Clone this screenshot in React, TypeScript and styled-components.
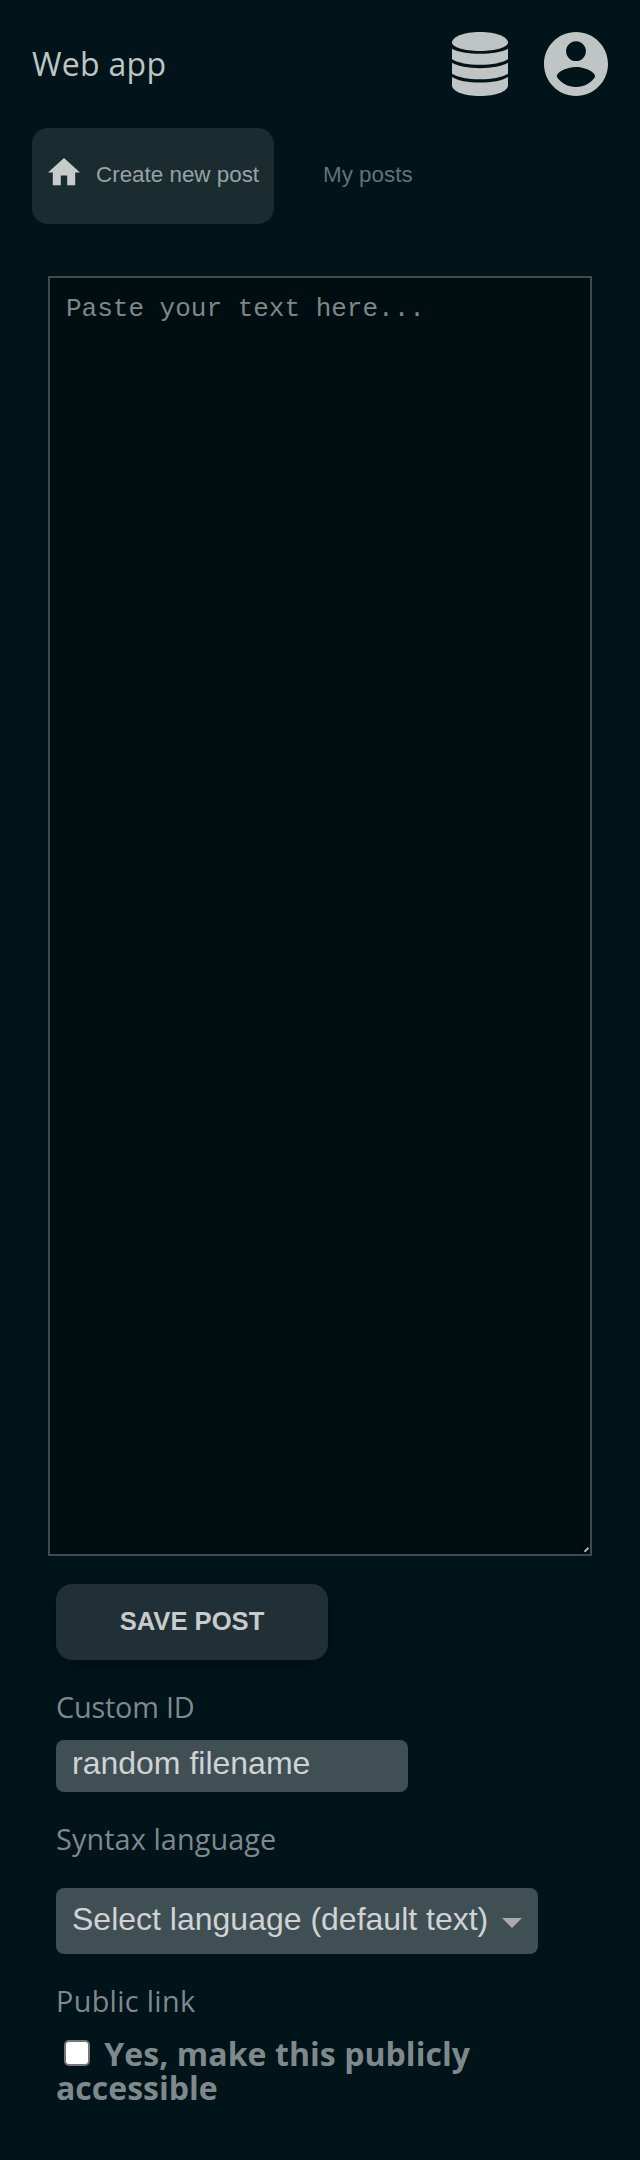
import React from 'react';
import styled, { createGlobalStyle } from 'styled-components';

const GlobalStyle = createGlobalStyle`
  *, *::before, *::after { box-sizing: border-box; }
  body {
    margin: 0;
    background: #001419;
    color: #bfc4c5;
    font-family: 'Open Sans', sans-serif;
  }
`;

const Page = styled.div`
  min-height: 2160px;
  display: flex;
  flex-direction: column;
`;

const Header = styled.header`
  display: flex;
  align-items: center;
  justify-content: space-between;
  height: 128px;
  padding: 0 32px;
`;

const Brand = styled.span`
  font-size: 32px;
  line-height: 44px;
  letter-spacing: 0.28px;
`;

const Actions = styled.div`
  display: flex;
  gap: 36px;
`;

const Icon = styled.svg<{ $w: number; $h: number }>`
  display: block;
  flex: none;
  width: ${(p) => p.$w}px;
  height: ${(p) => p.$h}px;
  fill: ${(p) => p.color ?? '#bfc4c5'};
`;

const Nav = styled.nav`
  display: flex;
  height: 96px;
  padding: 0 32px;
`;

const Tab = styled.a<{ $active?: boolean }>`
  display: flex;
  align-items: center;
  gap: 16px;
  width: 242px;
  padding-left: ${(p) => (p.$active ? 16 : 49)}px;
  padding-bottom: 2px;
  border-radius: 16px;
  background: ${(p) => (p.$active ? '#1a2c2f' : 'transparent')};
  color: ${(p) => (p.$active ? '#99a2a3' : '#667175')};
  font: 22.4px/26px 'Liberation Sans', sans-serif;
  white-space: nowrap;
`;

const TabIcon = styled.span`
  display: flex;
  padding-bottom: 6px;
`;

const EditorFrame = styled.div`
  position: relative;
  width: 544px;
  height: 1280px;
  margin: 52px 48px 28px;
`;

const Editor = styled.textarea`
  display: block;
  width: 100%;
  height: 100%;
  padding: 16px;
  border: 2px solid #40494d;
  border-radius: 0;
  outline: none;
  resize: none;
  background: #000e12;
  color: #bfc4c5;
  font: 26px/30px 'Liberation Mono', monospace;
  &::placeholder { color: #7f8688; }
`;

const Grip = styled.svg`
  position: absolute;
  right: 2px;
  bottom: 2px;
  width: 8px;
  height: 8px;
  pointer-events: none;
`;

const Form = styled.form`
  display: flex;
  flex-direction: column;
  align-items: flex-start;
  padding: 0 56px;
`;

const SaveButton = styled.button`
  width: 272px;
  height: 76px;
  padding: 0 0 2px;
  border: 0;
  border-radius: 16px;
  background: #213036;
  box-shadow: 0 4px 8px rgba(0, 0, 0, 0.3);
  color: #c8cbcc;
  font: bold 25.6px/30px 'Liberation Sans', sans-serif;
`;

const Label = styled.label<{ $gap: number; $tracking: number }>`
  margin: 27px 0 ${(p) => p.$gap}px;
  color: #7f898c;
  font-size: 28.8px;
  line-height: 40px;
  letter-spacing: ${(p) => p.$tracking}px;
`;

const TextInput = styled.input`
  width: 352px;
  height: 52px;
  padding: 0 16px 6px;
  border: 0;
  border-radius: 8px;
  background: #404f54;
  color: #cfd3d4;
  font: 32px/36px 'Liberation Sans', sans-serif;
  &::placeholder { color: #cfd3d4; opacity: 1; }
`;

const Select = styled.button`
  display: flex;
  align-items: center;
  justify-content: space-between;
  width: 482px;
  height: 66px;
  padding: 0 16px 4px;
  border: 0;
  border-radius: 8px;
  background: #404f54;
  color: #cfd3d4;
  font: 32px/36px 'Liberation Sans', sans-serif;
  white-space: nowrap;
`;

const Caret = styled.span`
  margin-top: 8px;
  border: 10px solid transparent;
  border-top-color: #aaa;
  border-bottom-width: 0;
`;

const Consent = styled.label`
  color: #7f898c;
  font-size: 32px;
  font-weight: 700;
  line-height: 34px;
`;

const Tracked = styled.span`
  letter-spacing: 0.06px;
`;

const Checkbox = styled.input`
  appearance: none;
  width: 26px;
  height: 26px;
  margin: 0 6px 0 8px;
  border: 2px solid #767676;
  border-radius: 5px;
  background: #fff;
  vertical-align: baseline;
`;

export default function App() {
  return (
    <>
      <GlobalStyle />
      <Page>
        <Header>
          <Brand>Web app</Brand>
          <Actions>
            <Icon $w={56} $h={64} viewBox="0 0 56 64">
              <path d="M28 0C44 0 56 4.8 56 10.5C56 15 44 19 28 19S0 15 0 10.5C0 4.8 12 0 28 0Z" />
              <path d="M0 16.7C6 20 16 21.8 28 21.8S50 20 56 16.7V27.3C50 31 40 32.8 28 32.8S6 31 0 27.3Z" />
              <path d="M0 30.8C6 34.3 16 36.2 28 36.2S50 34.3 56 30.8V41.7C50 45.3 40 47.3 28 47.3S6 45.3 0 41.7Z" />
              <path d="M0 45C6 48.7 16 50.6 28 50.6S50 48.7 56 45V53.5C56 59.3 44 64 28 64S0 59.3 0 53.5Z" />
            </Icon>
            <Icon $w={64} $h={64} viewBox="2 2 20 20">
              <path d="M12 2C6.48 2 2 6.48 2 12s4.48 10 10 10 10-4.48 10-10S17.52 2 12 2zm0 2.9c1.71 0 3.1 1.39 3.1 3.1S13.71 11.1 12 11.1 8.9 9.71 8.9 8 10.29 4.9 12 4.9zm0 14.3c-2.5 0-4.71-1.28-6-3.22.03-1.99 4-3.08 6-3.08 1.99 0 5.97 1.09 6 3.08-1.29 1.94-3.5 3.22-6 3.22z" />
            </Icon>
          </Actions>
        </Header>
        <Nav>
          <Tab $active>
            <TabIcon>
              <Icon $w={32} $h={27.2} color="#c8cbcc" viewBox="2 3 20 17">
                <path d="M10 20v-6h4v6h5v-8h3L12 3 2 12h3v8z" />
              </Icon>
            </TabIcon>
            Create new post
          </Tab>
          <Tab>My posts</Tab>
        </Nav>
        <EditorFrame>
          <Editor placeholder="Paste your text here..." />
          <Grip viewBox="0 0 8 8">
            <path d="M1.5 6.5L6.5 1.5" stroke="#000" strokeWidth="4" />
            <path d="M2.5 5.8L6.5 1.8" stroke="#b0b0b0" strokeWidth="2.2" />
          </Grip>
        </EditorFrame>
        <Form>
          <SaveButton type="button">SAVE POST</SaveButton>
          <Label $gap={13} $tracking={-0.19}>Custom ID</Label>
          <TextInput placeholder="random filename" />
          <Label $gap={29} $tracking={0.11}>Syntax language</Label>
          <Select type="button">
            Select language (default text)
            <Caret />
          </Select>
          <Label $gap={16} $tracking={0.33}>Public link</Label>
          <Consent>
            <Checkbox type="checkbox" /> <Tracked>Yes, make this publicly</Tracked> accessible
          </Consent>
        </Form>
      </Page>
    </>
  );
}
